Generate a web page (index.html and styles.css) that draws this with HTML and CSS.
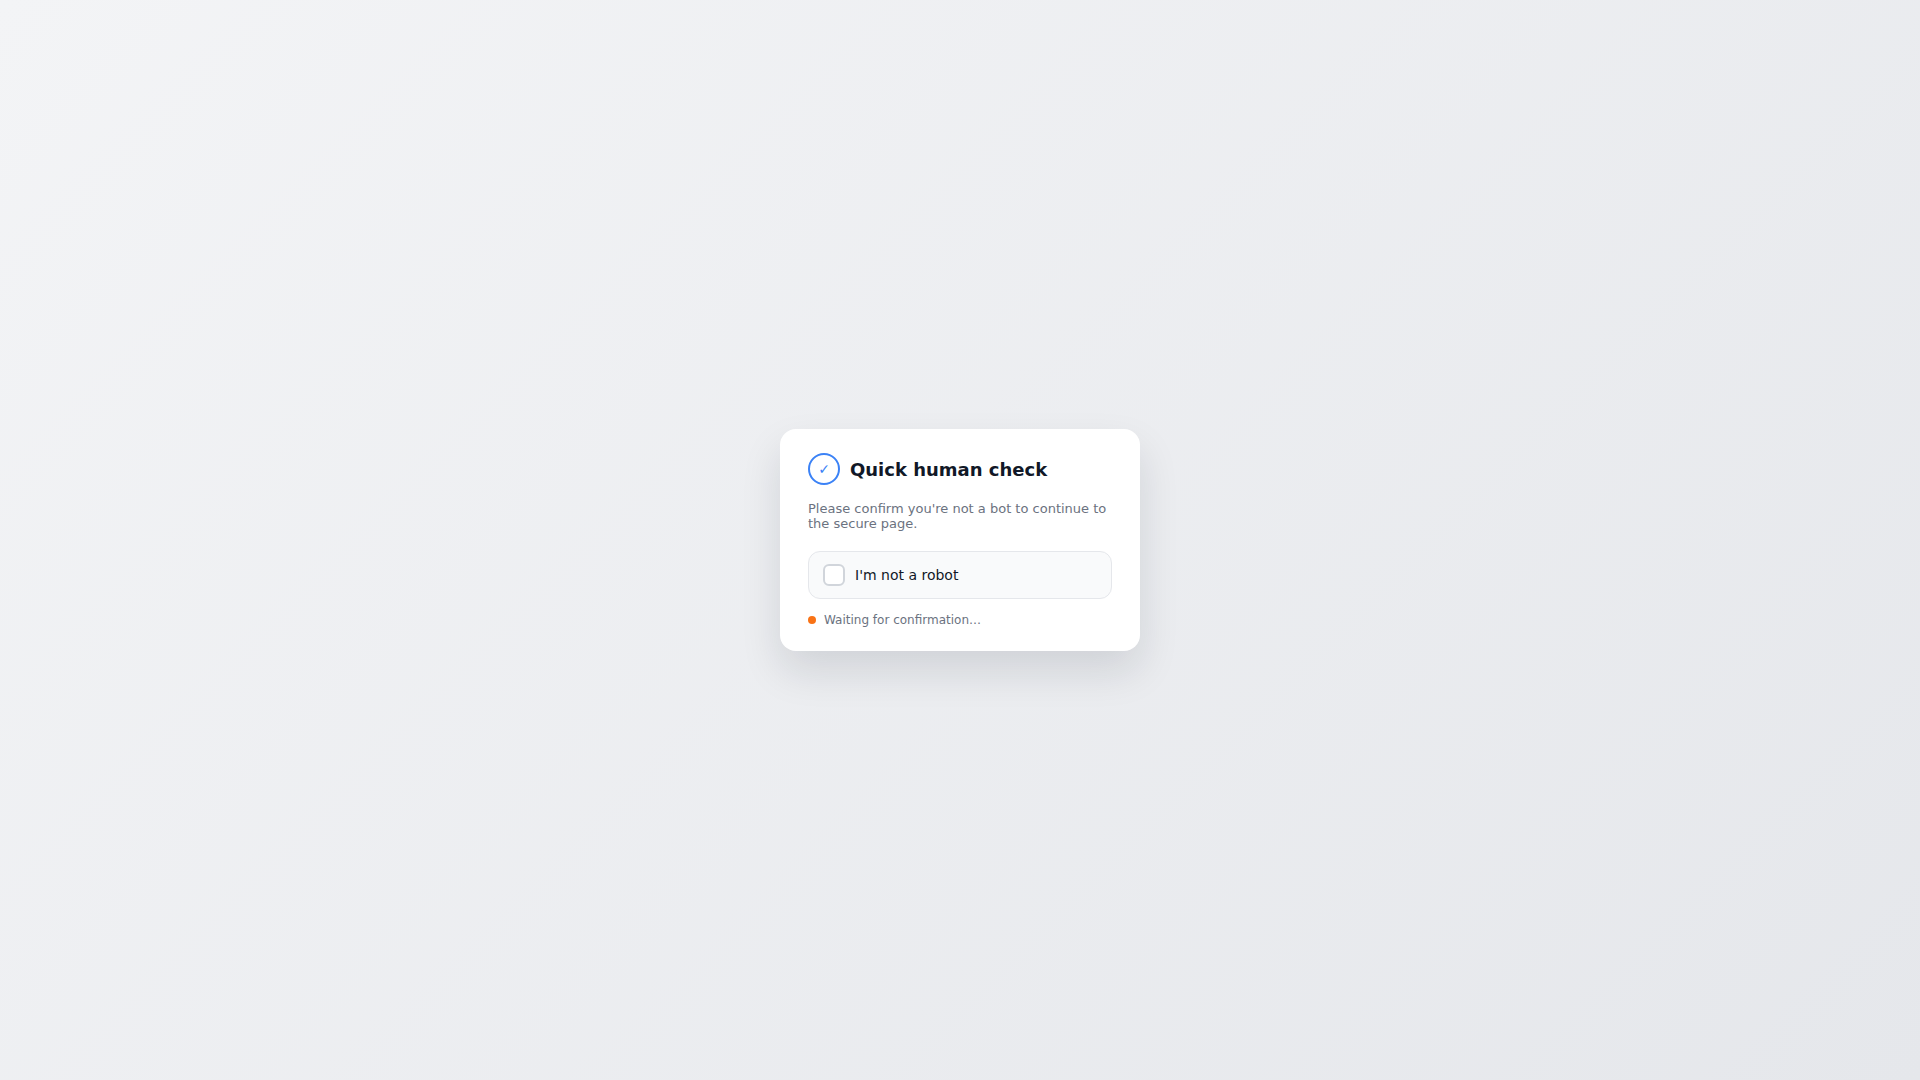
FILE: index.html
```html
<!DOCTYPE html>
<html lang="en">
<head>
<meta charset="utf-8">
<meta name="viewport" content="width=device-width, initial-scale=1">
<title>Quick human check</title>
<link rel="stylesheet" href="styles.css">
</head>
<body>
<main class="card">
  <header class="card-header">
    <span class="badge" aria-hidden="true">✓</span>
    <h1 class="title">Quick human check</h1>
  </header>
  <p class="description">Please confirm you're not a bot to continue to the secure page.</p>
  <label class="check-row" for="robot">
    <input class="check-box" type="checkbox" id="robot">
    <span>I'm not a robot</span>
  </label>
  <div class="status" role="status">
    <span class="status-dot"></span>
    <span>Waiting for confirmation…</span>
  </div>
</main>
</body>
</html>
```
FILE: styles.css
```css
* {
  box-sizing: border-box;
}

body {
  margin: 0;
  min-height: 100vh;
  display: flex;
  align-items: center;
  justify-content: center;
  background: linear-gradient(135deg, #f3f4f6, #e5e7eb);
  color: #111827;
  font-family: "DejaVu Sans", sans-serif;
}

.card {
  width: 100%;
  max-width: 360px;
  padding: 24px 28px;
  border-radius: 16px;
  background: #ffffff;
  box-shadow: 0 20px 40px rgba(15, 23, 42, 0.12);
}

.card-header {
  display: flex;
  align-items: center;
  gap: 10px;
  margin-bottom: 16px;
}

.badge {
  display: flex;
  align-items: center;
  justify-content: center;
  width: 32px;
  height: 32px;
  border: 2px solid #3b82f6;
  border-radius: 50%;
  color: #3b82f6;
  font-size: 14px;
}

.title {
  margin: 0;
  font-size: 18px;
  font-weight: 600;
}

.description {
  margin: 0 0 20px;
  color: #6b7280;
  font-size: 13px;
}

.check-row {
  display: flex;
  align-items: center;
  gap: 10px;
  padding: 12px 14px;
  border: 1px solid #e5e7eb;
  border-radius: 12px;
  background: #f9fafb;
  font-size: 14px;
  cursor: pointer;
}

.check-box {
  appearance: none;
  flex: none;
  width: 22px;
  height: 22px;
  margin: 0;
  border: 2px solid #d1d5db;
  border-radius: 6px;
  background: #ffffff;
}

.check-box:checked {
  border-color: #3b82f6;
  background: #3b82f6;
}

.status {
  display: flex;
  align-items: center;
  gap: 8px;
  margin-top: 14px;
  color: #6b7280;
  font-size: 12px;
}

.status-dot {
  width: 8px;
  height: 8px;
  border-radius: 50%;
  background: #f97316;
}
```
